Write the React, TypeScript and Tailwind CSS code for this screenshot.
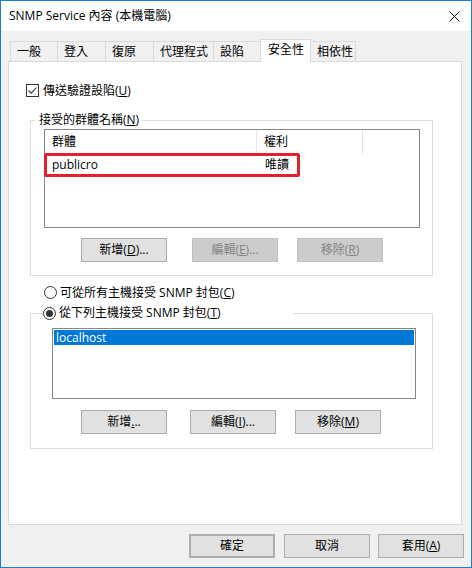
import React from "react";

const font = { fontFamily: '"Open Sans", "Noto Sans CJK TC", sans-serif' };

const tabs = [
  { label: "一般", w: "w-[47px]" },
  { label: "登入", w: "w-[48px]" },
  { label: "復原", w: "w-[48px]" },
  { label: "代理程式", w: "w-[60px]" },
  { label: "設陷", w: "w-[47px]" },
];

const Btn = ({
  children,
  disabled,
  className = "",
}: {
  children: React.ReactNode;
  disabled?: boolean;
  className?: string;
}) => (
  <div
    className={`w-[86px] h-[24px] flex items-center justify-center text-[12px] leading-[16px] border ${
      disabled
        ? "bg-[#cccccc] border-[#bfbfbf] text-[#838383]"
        : "bg-[#e1e1e1] border-[#adadad] text-black"
    } ${className}`}
  >
    {children}
  </div>
);

const Radio = ({ checked }: { checked?: boolean }) => (
  <span className="w-[13px] h-[13px] rounded-full border border-[#333] bg-white flex items-center justify-center shrink-0">
    {checked && <span className="w-[7px] h-[7px] rounded-full bg-[#333]" />}
  </span>
);

const App = () => {
  return (
    <div
      style={font}
      className="w-[472px] h-[568px] border border-[#1a7fd4] bg-[#f0f0f0] flex flex-col text-[12px] leading-[16px] text-black overflow-hidden"
    >
      {/* Title bar */}
      <div className="h-[30px] bg-white flex items-center pl-[8px] pr-[10px] shrink-0">
        <span className="flex-1">SNMP Service 內容 (本機電腦)</span>
        <svg width="11" height="11" viewBox="0 0 11 11" className="mr-[1px]">
          <path d="M0.5 0.5 L10.5 10.5 M10.5 0.5 L0.5 10.5" stroke="#111" strokeWidth="1" />
        </svg>
      </div>

      {/* Tabs */}
      <div className="mt-[8px] h-[22px] pl-[9px] flex items-end shrink-0">
        {tabs.map((t) => (
          <div
            key={t.label}
            className={`${t.w} h-[20px] border-l border-t border-[#d9d9d9] bg-[#f0f0f0] pl-[6px] flex items-center`}
          >
            {t.label}
          </div>
        ))}
        <div className="relative z-10 w-[51px] h-[23px] -mb-px border-l border-t border-r border-[#d9d9d9] bg-white pl-[7px] pb-[2px] flex items-center">
          安全性
        </div>
        <div className="w-[45px] h-[20px] border-t border-r border-[#d9d9d9] bg-[#f0f0f0] pl-[6px] flex items-center">
          相依性
        </div>
      </div>

      {/* Panel */}
      <div className="ml-[7px] w-[454px] h-[464px] border border-[#d9d9d9] bg-white shrink-0 flex flex-col">
        <div className="mt-[22px] ml-[17px] h-[13px] flex items-center">
          <span className="w-[13px] h-[13px] border border-[#333] bg-white flex items-center justify-center">
            <svg width="11" height="11" viewBox="0 0 11 11">
              <path d="M1.5 5.5 L4.2 8.2 L9.5 2.5" fill="none" stroke="#333" strokeWidth="1.1" />
            </svg>
          </span>
          <span className="ml-[4px]">
            傳送驗證設陷(<span className="underline">U</span>)
          </span>
        </div>

        <fieldset className="mt-[15px] ml-[21px] w-[403px] border border-[#dcdcdc] pb-[13px] min-w-0">
          <legend className="ml-[4px] px-[4px] leading-[16px]">
            接受的群體名稱(<span className="underline">N</span>)
          </legend>
          <div className="relative mt-[1px] ml-[13px] w-[376px] h-[99px] border border-[#828790] bg-white">
            <div className="h-[24px] flex">
              <div className="w-[212px] h-full border-r border-[#e5e5e5] pl-[7px] flex items-center">群體</div>
              <div className="w-[106px] h-full border-r border-[#e5e5e5] pl-[7px] flex items-center">權利</div>
            </div>
            <div className="mt-[1px] h-[19px] flex items-center">
              <div className="w-[212px] pl-[7px]">publicro</div>
              <div className="pl-[8px]">唯讀</div>
            </div>
            <div className="absolute left-[-1px] top-[23px] w-[256px] h-[24px] border-[3px] border-[#e3202b] rounded-[2px]" />
          </div>
          <div className="mt-[10px] ml-[50px] flex">
            <Btn>
              新增(<span className="underline">D</span>)...
            </Btn>
            <Btn disabled className="ml-[25px]">
              編輯(<span className="underline">E</span>)...
            </Btn>
            <Btn disabled className="ml-[19px]">
              移除(<span className="underline">R</span>)
            </Btn>
          </div>
        </fieldset>

        <div className="mt-[10px] ml-[35px] h-[13px] flex items-center">
          <Radio />
          <span className="ml-[3px]">
            可從所有主機接受 SNMP 封包(<span className="underline">C</span>)
          </span>
        </div>

        <fieldset className="mt-[6px] ml-[21px] w-[403px] border border-[#dcdcdc] pb-[14px] min-w-0">
          <legend className="ml-[12px] w-[250px] flex items-center h-[16px]">
            <Radio checked />
            <span className="ml-[3px]">
              從下列主機接受 SNMP 封包(<span className="underline">T</span>)
            </span>
          </legend>
          <div className="mt-[7px] ml-[21px] w-[364px] h-[71px] border border-[#828790] bg-white p-px">
            <div className="h-[15px] bg-[#0078d7] text-white pl-[2px] flex items-center">localhost</div>
          </div>
          <div className="mt-[11px] ml-[50px] flex">
            <Btn>
              新增<span className="underline">.</span>..
            </Btn>
            <Btn className="ml-[23px]">
              編輯(<span className="underline">I</span>)...
            </Btn>
            <Btn className="ml-[19px]">
              移除(<span className="underline">M</span>)
            </Btn>
          </div>
        </fieldset>
      </div>

      {/* Dialog buttons */}
      <div className="mt-[9px] pl-[188px] flex">
        <Btn className="border-2 border-[#0078d7]">確定</Btn>
        <Btn className="ml-[9px]">取消</Btn>
        <Btn className="ml-[8px]">
          套用(<span className="underline">A</span>)
        </Btn>
      </div>
    </div>
  );
};

export default App;
